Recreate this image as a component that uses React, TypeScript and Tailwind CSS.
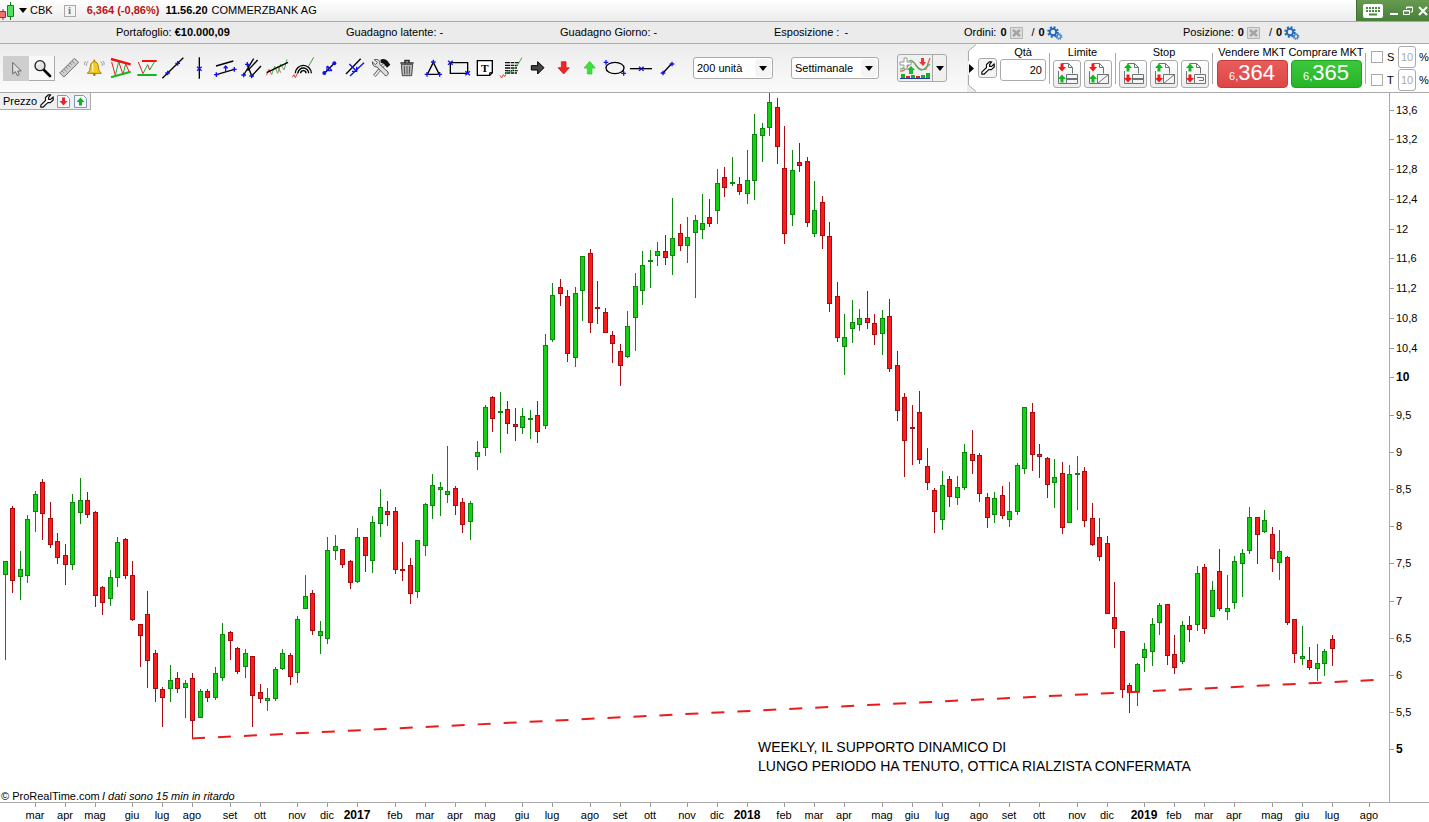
import type { ReactNode } from "react";

type Candle = ["g" | "r", number, number, number, number];

// direction, high, body top, body bottom, low
const candles: Candle[] = [
  ["g", 561, 561, 575, 660], ["r", 506, 508, 581, 593], ["g", 551, 569, 577, 600], ["g", 515, 519, 576, 583],
  ["g", 491, 494, 512, 532], ["r", 479, 482, 514, 540], ["r", 502, 518, 545, 548], ["r", 533, 541, 558, 564],
  ["r", 544, 555, 565, 585], ["g", 494, 502, 565, 570], ["g", 478, 500, 513, 524], ["r", 492, 500, 515, 518],
  ["r", 511, 512, 596, 607], ["r", 586, 587, 603, 615], ["g", 570, 577, 599, 606], ["g", 537, 542, 578, 587],
  ["r", 538, 539, 576, 579], ["r", 561, 575, 620, 621], ["r", 624, 624, 636, 667], ["r", 591, 614, 661, 688],
  ["r", 650, 653, 689, 702], ["r", 687, 689, 698, 727], ["g", 665, 680, 689, 702], ["r", 672, 678, 689, 693],
  ["g", 680, 683, 688, 718], ["r", 673, 678, 721, 738], ["g", 689, 691, 718, 718], ["r", 689, 691, 698, 702],
  ["g", 667, 673, 698, 700], ["g", 623, 634, 678, 681], ["r", 631, 632, 641, 660], ["r", 647, 648, 672, 674],
  ["g", 649, 653, 667, 678], ["r", 656, 656, 696, 727], ["r", 684, 692, 699, 703], ["g", 688, 698, 701, 711],
  ["g", 667, 669, 699, 701], ["g", 649, 653, 669, 670], ["r", 653, 655, 677, 685], ["g", 616, 619, 673, 683],
  ["g", 575, 596, 609, 609], ["r", 590, 593, 631, 635], ["g", 621, 631, 636, 654], ["g", 537, 550, 639, 644],
  ["g", 535, 546, 551, 560], ["r", 549, 549, 565, 568], ["r", 560, 561, 583, 589], ["g", 528, 537, 582, 583],
  ["r", 537, 537, 556, 572], ["g", 516, 522, 561, 573], ["g", 489, 507, 524, 537], ["r", 501, 511, 515, 526],
  ["r", 507, 511, 570, 574], ["r", 542, 569, 571, 581], ["r", 558, 565, 594, 604], ["g", 540, 540, 592, 598],
  ["g", 503, 504, 546, 556], ["g", 474, 485, 506, 519], ["g", 482, 487, 490, 516], ["g", 446, 491, 495, 503],
  ["r", 486, 488, 506, 515], ["r", 498, 502, 525, 533], ["g", 501, 503, 522, 540], ["g", 441, 452, 457, 470],
  ["g", 405, 407, 448, 456], ["r", 396, 397, 419, 432], ["g", 392, 411, 413, 453], ["r", 401, 409, 424, 434],
  ["r", 408, 424, 427, 441], ["g", 408, 416, 428, 434], ["g", 410, 418, 420, 439], ["r", 401, 415, 432, 443],
  ["g", 334, 345, 426, 429], ["g", 283, 295, 340, 342], ["r", 279, 287, 294, 306], ["r", 290, 296, 354, 362],
  ["g", 287, 293, 358, 367], ["g", 256, 256, 291, 321], ["r", 249, 253, 323, 333], ["r", 281, 307, 309, 324],
  ["r", 308, 312, 333, 333], ["r", 331, 335, 344, 363], ["r", 344, 351, 366, 386], ["g", 311, 326, 357, 358],
  ["g", 273, 286, 318, 351], ["g", 251, 265, 291, 305], ["g", 250, 260, 262, 288], ["g", 242, 251, 256, 266],
  ["r", 235, 251, 258, 265], ["g", 198, 238, 256, 275], ["r", 224, 233, 246, 251], ["g", 217, 237, 246, 263],
  ["g", 215, 220, 233, 298], ["g", 194, 223, 230, 239], ["r", 199, 217, 224, 227], ["g", 169, 183, 211, 224],
  ["r", 167, 177, 188, 197], ["g", 157, 182, 184, 186], ["r", 177, 184, 192, 195], ["g", 150, 180, 194, 204],
  ["g", 114, 134, 181, 200], ["g", 123, 128, 136, 162], ["g", 93, 102, 128, 136], ["r", 98, 107, 147, 164],
  ["r", 126, 168, 234, 244], ["g", 150, 170, 215, 226], ["r", 143, 162, 166, 172], ["r", 157, 161, 223, 227],
  ["g", 181, 210, 234, 237], ["r", 196, 202, 236, 249], ["r", 222, 236, 304, 312], ["r", 282, 296, 338, 342],
  ["g", 314, 337, 347, 375], ["g", 300, 322, 329, 343], ["g", 309, 318, 325, 331], ["r", 291, 318, 323, 329],
  ["r", 314, 323, 335, 345], ["g", 310, 318, 334, 355], ["r", 299, 316, 369, 372], ["r", 351, 365, 411, 421],
  ["r", 393, 397, 441, 477], ["r", 405, 427, 429, 465], ["r", 391, 412, 460, 464], ["r", 448, 466, 483, 490],
  ["r", 488, 490, 512, 533], ["g", 471, 485, 520, 530], ["r", 476, 479, 497, 507], ["g", 476, 487, 498, 505],
  ["g", 444, 452, 488, 490], ["r", 430, 454, 461, 474], ["r", 453, 455, 494, 502], ["r", 493, 497, 518, 528],
  ["g", 492, 498, 515, 523], ["r", 486, 495, 516, 519], ["g", 482, 511, 520, 527], ["g", 463, 465, 512, 515],
  ["g", 407, 407, 469, 474], ["r", 403, 412, 455, 471], ["r", 444, 454, 457, 478], ["r", 457, 458, 485, 498],
  ["g", 459, 477, 483, 508], ["r", 462, 473, 528, 534], ["g", 465, 474, 523, 523], ["g", 456, 473, 475, 510],
  ["r", 467, 471, 521, 527], ["r", 503, 518, 545, 546], ["r", 518, 537, 557, 561], ["r", 536, 543, 614, 614],
  ["r", 582, 617, 629, 648], ["r", 631, 631, 690, 698], ["r", 683, 685, 693, 713], ["g", 663, 664, 692, 706],
  ["g", 643, 649, 658, 672], ["g", 618, 624, 652, 666], ["g", 603, 605, 623, 635], ["r", 604, 604, 656, 665],
  ["r", 635, 654, 668, 674], ["g", 621, 625, 662, 664], ["r", 616, 625, 630, 642], ["g", 566, 573, 625, 631],
  ["r", 564, 567, 629, 634], ["g", 581, 590, 617, 617], ["r", 549, 571, 609, 611], ["g", 575, 608, 612, 620],
  ["g", 556, 561, 603, 609], ["g", 549, 553, 564, 597], ["g", 507, 517, 551, 554], ["r", 517, 517, 535, 564],
  ["g", 510, 520, 532, 533], ["r", 527, 534, 559, 572], ["g", 530, 551, 563, 580], ["r", 556, 557, 623, 625],
  ["r", 619, 619, 654, 663], ["g", 626, 656, 659, 665], ["r", 647, 660, 668, 670], ["g", 644, 663, 669, 681],
  ["g", 649, 651, 664, 676], ["r", 635, 639, 649, 666],
];

const prices: [string, number][] = [
  ["13,6", 110], ["13,2", 139], ["12,8", 169], ["12,4", 199], ["12", 229], ["11,6", 258], ["11,2", 288],
  ["10,8", 318], ["10,4", 348], ["10", 377], ["9,5", 415], ["9", 452], ["8,5", 489], ["8", 526], ["7,5", 563],
  ["7", 601], ["6,5", 638], ["6", 675], ["5,5", 712], ["5", 749],
];

const months: [string, number][] = [
  ["mar", 35], ["apr", 65], ["mag", 95], ["giu", 132], ["lug", 162], ["ago", 192], ["set", 230], ["ott", 260],
  ["nov", 297], ["dic", 327], ["2017", 357], ["feb", 395], ["mar", 425], ["apr", 455], ["mag", 485], ["giu", 522],
  ["lug", 552], ["ago", 590], ["set", 620], ["ott", 650], ["nov", 687], ["dic", 717], ["2018", 747], ["feb", 784],
  ["mar", 814], ["apr", 844], ["mag", 882], ["giu", 912], ["lug", 942], ["ago", 979], ["set", 1009], ["ott", 1039],
  ["nov", 1077], ["dic", 1107], ["2019", 1144], ["feb", 1174], ["mar", 1204], ["apr", 1234], ["mag", 1272],
  ["giu", 1302], ["lug", 1332], ["ago", 1369],
];

const candleX = (i: number) => Math.floor(5.49 + 7.4947 * i);

function Plus({ x, y }: { x: number; y: number }) {
  return <path d={`M${x - 7} ${y}h14M${x} ${y - 7}v14`} stroke="#1010f0" strokeWidth="4" />;
}

function Cross({ x, y }: { x: number; y: number }) {
  return <path d={`M${x - 7} ${y - 6}l14 12M${x + 7} ${y - 6}l-14 12`} stroke="#1010f0" strokeWidth="4" />;
}

// Toolbar glyphs, all on a 78x72 grid
const tools: { name: string; icon: ReactNode }[] = [
  {
    name: "Cursore",
    icon: <path d="M29 19v35l8-7 6 12 6-3-5-11h11z" fill="#dedede" stroke="#666" strokeWidth="3" />,
  },
  {
    name: "Zoom",
    icon: (
      <>
        <path d="M45 42l18 18" stroke="#000" strokeWidth="8" strokeLinecap="round" />
        <circle cx="33" cy="29" r="15" fill="#e4e4e4" stroke="#222" strokeWidth="4" />
        <path d="M25 28q2-8 9-8" stroke="#fff" strokeWidth="4" />
      </>
    ),
  },
  {
    name: "Righello",
    icon: (
      <>
        <path d="M14 51L58 7l13 12L27 63z" fill="#cdcdcd" stroke="#777" strokeWidth="3" />
        <path d="M21 45l5 5M27 39l7 7M33 33l5 5M39 27l7 7M45 21l5 5M51 15l7 7" stroke="#666" strokeWidth="2" />
      </>
    ),
  },
  {
    name: "Allarme",
    icon: (
      <>
        <circle cx="40" cy="56" r="4" fill="#a97b00" />
        <path d="M19 52q9-6 9-20 1-15 12-15t12 15q0 14 9 20z" fill="#f7c81e" stroke="#a88008" strokeWidth="3" />
        <path d="M35 23v24" stroke="#fff4a8" strokeWidth="4" />
        <path d="M40 17v-6" stroke="#a88008" strokeWidth="5" />
        <path d="M21 16q-6 6-5 14M14 15q-5 5-3 12M59 16q6 6 5 14M66 15q5 5 3 12" stroke="#777" strokeWidth="2" />
      </>
    ),
  },
  {
    name: "Triangolo di prezzo",
    icon: (
      <>
        <path d="M14 18l11 40M35 17l13 38M56 23l11 26" stroke="#e02020" strokeWidth="3" />
        <path d="M25 58l10-41M48 55l8-32" stroke="#18a830" strokeWidth="3" />
        <path d="M12 9l59 16" stroke="#f01010" strokeWidth="7" />
        <path d="M12 64l59-17" stroke="#10b820" strokeWidth="6" />
      </>
    ),
  },
  {
    name: "Supporti e resistenze",
    icon: (
      <>
        <path d="M30 53l14-27M50 42l14-24" stroke="#18a830" strokeWidth="3" />
        <path d="M16 18l14 35M44 26l6 16" stroke="#e02020" strokeWidth="3" />
        <path d="M27 15h44" stroke="#f01010" strokeWidth="6" />
        <path d="M13 57h58" stroke="#10b820" strokeWidth="6" />
      </>
    ),
  },
  {
    name: "Retta",
    icon: (
      <>
        <path d="M10 67L73 5" stroke="#000" strokeWidth="4" />
        <Plus x={26} y={51} />
        <Plus x={56} y={22} />
      </>
    ),
  },
  {
    name: "Retta verticale",
    icon: (
      <>
        <path d="M43 4v64" stroke="#000" strokeWidth="4" />
        <Cross x={43} y={38} />
      </>
    ),
  },
  {
    name: "Canale",
    icon: (
      <>
        <path d="M15 30l52-15M16 56l54-16" stroke="#000" strokeWidth="4" />
        <path d="M44 30v18M38 37l6-7 6 7" stroke="#1010f0" strokeWidth="4" />
        <Plus x={16} y={56} />
        <Plus x={70} y={40} />
      </>
    ),
  },
  {
    name: "Forchetta di Andrews",
    icon: (
      <>
        <path d="M31 25l13 35M20 57L50 8M32 44L62 12M44 60L72 30" stroke="#000" strokeWidth="4" />
        <Plus x={20} y={57} />
        <Plus x={31} y={25} />
        <Plus x={44} y={60} />
      </>
    ),
  },
  {
    name: "Regressione lineare",
    icon: (
      <>
        <path d="M10 58l8-18 8 16M44 30l9 20" stroke="#e05040" strokeWidth="3" />
        <path d="M26 56l9-26 9 22 9-28 10 18 9-32" stroke="#58b060" strokeWidth="3" />
        <path d="M11 50l64-31" stroke="#000" strokeWidth="4" />
      </>
    ),
  },
  {
    name: "Archi di Fibonacci",
    icon: (
      <>
        <path d="M10 64l5-8 4 9 9-19" stroke="#e04030" strokeWidth="3" />
        <path d="M28 46l12-14M58 32L74 4" stroke="#28a838" strokeWidth="3" />
        <path d="M19 52a24 24 0 0 1 48 0M27 52a16 16 0 0 1 32 0M35 52a8 8 0 0 1 16 0" stroke="#000" strokeWidth="4" />
      </>
    ),
  },
  {
    name: "Estensione",
    icon: (
      <>
        <path d="M29 51l29-29" stroke="#000" strokeWidth="4" />
        <circle cx="28" cy="51" r="6" fill="#1010f0" />
        <circle cx="58" cy="22" r="6" fill="#1010f0" />
        <path d="M36 30v14h14M37 30l14 14" stroke="#1010f0" strokeWidth="4" />
      </>
    ),
  },
  {
    name: "Rette parallele",
    icon: (
      <>
        <path d="M15 54l44-46" stroke="#000" strokeWidth="4" />
        <path d="M27 60l42-40M25 24l22 22M47 32v14H33" stroke="#1010f0" strokeWidth="4" />
      </>
    ),
  },
  {
    name: "Strumenti",
    icon: (
      <>
        <path d="M22 60l28-34" stroke="#666" strokeWidth="10" />
        <path d="M23 59l27-33" stroke="#eee" strokeWidth="5" />
        <path d="M16 17l9 9 6-6-9-9q13-3 17 7l-1 7 25 23q4 7-4 11-5 1-9-5L30 33q-14 0-14-16z" fill="#ddd" stroke="#555" strokeWidth="3" />
        <path d="M40 11q13-5 21 3l9 12-10 9-9-11-9-4z" fill="#111" />
      </>
    ),
  },
  {
    name: "Cestino",
    icon: (
      <>
        <path d="M25 25h34l-3 34H28z" fill="#bbb" stroke="#444" strokeWidth="3" />
        <path d="M22 21h40M36 19v-5h12v5" stroke="#333" strokeWidth="5" />
        <path d="M34 30l1 25M42 30v25M50 30l-1 25" stroke="#555" strokeWidth="3" />
      </>
    ),
  },
  {
    name: "Triangolo",
    icon: (
      <>
        <path d="M43 19L25 55h36z" stroke="#000" strokeWidth="4" />
        <Plus x={43} y={18} />
        <Plus x={24} y={55} />
        <Plus x={62} y={55} />
      </>
    ),
  },
  {
    name: "Rettangolo",
    icon: (
      <>
        <path d="M16 20h52v32H16z" stroke="#000" strokeWidth="4" />
        <Cross x={16} y={20} />
        <Cross x={68} y={52} />
      </>
    ),
  },
  {
    name: "Testo",
    icon: (
      <>
        <path d="M19 14h45v36l-8 8H19z" fill="#fff" stroke="#000" strokeWidth="4" />
        <path d="M64 50h-8v8" stroke="#000" strokeWidth="3" />
        <text x="41" y="48" textAnchor="middle" fontSize="34" fontWeight="bold" fill="#000" className="font-['Liberation_Serif',serif]">T</text>
      </>
    ),
  },
  {
    name: "Note",
    icon: (
      <>
        <path d="M24 20h42M24 28h38M24 36h36M24 44h38M24 51h36" stroke="#111" strokeWidth="4" strokeDasharray="16 2 9 2" />
        <path d="M9 58l5 8 5-10 4 6" stroke="#e04030" strokeWidth="3" />
        <path d="M23 62l10-18 9 4L62 26 75 5" stroke="#38a848" strokeWidth="3" />
      </>
    ),
  },
  {
    name: "Freccia destra",
    icon: <path d="M25 29h19V17l19 18-19 19V42H25z" fill="#444" stroke="#000" strokeWidth="3" />,
  },
  {
    name: "Freccia giù",
    icon: <path d="M37 17h14v18h10L44 54 27 35h10z" fill="#f02525" stroke="#c01010" strokeWidth="2" />,
  },
  {
    name: "Freccia su",
    icon: <path d="M37 54h14V36h10L44 16 27 36h10z" fill="#3ce03c" stroke="#28c828" strokeWidth="2" />,
  },
  {
    name: "Ellisse",
    icon: (
      <>
        <ellipse cx="42" cy="36" rx="27" ry="17" stroke="#000" strokeWidth="4" />
        <Plus x={15} y={19} />
        <Plus x={68} y={52} />
      </>
    ),
  },
  {
    name: "Retta orizzontale",
    icon: (
      <>
        <path d="M9 38h66" stroke="#000" strokeWidth="4" />
        <Cross x={43} y={38} />
      </>
    ),
  },
  {
    name: "Segmento",
    icon: (
      <>
        <path d="M30 51l25-27" stroke="#000" strokeWidth="4" />
        <Plus x={30} y={51} />
        <Plus x={57} y={24} />
      </>
    ),
  },
];

function Wrench() {
  return (
    <svg viewBox="0 0 14 14" className="size-3.5" fill="none" stroke="#111" strokeWidth="1.2" strokeLinejoin="round">
      <path d="M.8 11.2L5.5 6.500V3.500L8.500.8h2.200L8.600 3.400v2h2L13.200 3v3l-2.800 2.600H7.800L3 13.200H.8z" fill="#fff" />
    </svg>
  );
}

function Gears() {
  return (
    <svg viewBox="0 0 16 14" className="h-3.5 w-4" fill="none">
      <circle cx="6" cy="6" r="4.8" stroke="#2468b8" strokeWidth="2" strokeDasharray="2 1.77" />
      <circle cx="6" cy="6" r="3.2" stroke="#2468b8" strokeWidth="2" />
      <circle cx="12" cy="10.5" r="2.8" stroke="#3c80cc" strokeWidth="1.2" strokeDasharray="1.2 1" />
      <circle cx="12" cy="10.5" r="1.8" stroke="#3c80cc" strokeWidth="1.2" />
    </svg>
  );
}

function CancelIcon() {
  return (
    <svg viewBox="0 0 13 12" className="h-3 w-[13px]" fill="none">
      <path d="M.5.5h12v11H.5z" fill="#ddd" stroke="#b4b4b4" />
      <path d="M3 3l7 6M10 3L3 9" stroke="#a4a4a4" strokeWidth="2.5" />
    </svg>
  );
}

function Caret() {
  return (
    <svg viewBox="0 0 8 5" className="h-[5px] w-2">
      <path d="M0 0h8L4 5z" fill="#000" />
    </svg>
  );
}

function Picker({ label, value, width }: { label: string; value: string; width: string }) {
  return (
    <div className={`relative h-[22px] ${width}`}>
      <select
        aria-label={label}
        defaultValue={value}
        className="h-full w-full appearance-none rounded-[3px] border border-[#aaa] bg-white pl-[3px] text-black"
      >
        <option>{value}</option>
      </select>
      <span className="pointer-events-none absolute top-0.5 right-0.5 flex h-[18px] w-4 items-center justify-center rounded-sm bg-[#f4f4f4]">
        <Caret />
      </span>
    </div>
  );
}

function OrderButton({ label, upFirst, kind }: { label: string; upFirst: boolean; kind: "split" | "slash" | "trail" }) {
  return (
    <button aria-label={label} className="flex size-7 items-center justify-center rounded-[3px] border border-[#aaa] bg-linear-to-b from-white to-[#ececec]">
      <svg viewBox="0 0 26 26" className="size-[26px] shrink-0" fill="none">
        <path d="M7.500 2.500h7l4 4v6M14.500 2.500v4h4M4.500 10v12.500h8" stroke="#6c7478" />
        <path d="M12.500 13.500h11v9h-11z" fill="#f4f4f4" stroke="#6c7478" />
        {kind === "split" && <path d="M12 18h12" stroke="#6c7478" strokeWidth="2" />}
        {kind === "slash" && <path d="M12.500 22.500l11-9" stroke="#6c7478" />}
        {kind === "trail" && <path d="M15 16.500h6.500v3H17" stroke="#6c7478" />}
        {upFirst ? (
          <>
            <path d="M6.500 10.500V7H4l4-4.500L12 7H9.500v3.500z" fill="#10b820" />
            <path d="M6.500 13.500V17H4l4 4.500 4-4.500H9.500v-3.500z" fill="#f01818" />
          </>
        ) : (
          <>
            <path d="M6.500 2.500V6H4l4 4.500L12 6H9.500V2.500z" fill="#f01818" />
            <path d="M6.500 21.500V18H4l4-4.500 4 4.500H9.500v3.500z" fill="#10b820" />
          </>
        )}
      </svg>
    </button>
  );
}

function Divider() {
  return <div className="mx-[3px] h-[31px] w-px self-center bg-[#aaa]" />;
}

function TitleBar() {
  return (
    <header className="flex h-[22px] items-center border-b border-[#aaa] bg-linear-to-b from-white to-[#ececec]">
      <svg viewBox="0 0 14 18" className="h-[18px] w-3.5">
        <path d="M3 7v11" stroke="#a02020" />
        <path d="M-.5 9.500h6v6h-6z" fill="#f07070" stroke="#a03030" />
        <path d="M10.500 0v18" stroke="#108010" />
        <path d="M7.500 3.500h6v11h-6z" fill="#50e060" stroke="#188020" />
      </svg>
      <button aria-label="Elenco titoli" className="ml-[5px]">
        <Caret />
      </button>
      <span className="ml-[3px]">CBK</span>
      <button aria-label="Informazioni" className="ml-[11px] flex size-3 items-center justify-center border border-[#aaa] bg-[#f4f4f4] font-['Liberation_Serif',serif] font-bold text-[#777]">
        i
      </button>
      <span className="ml-[11px] font-bold text-[#b81414]">6,364 (-0,86%)</span>
      <span className="ml-1.5 font-bold">11.56.20</span>
      <span className="ml-1">COMMERZBANK AG</span>
      <div className="ml-auto flex h-full w-[73px] items-center border-l border-[#456c34] bg-linear-to-b from-[#659a50] to-[#48803a] pl-1.5 text-white">
        <button aria-label="Tastiera">
          <svg viewBox="0 0 20 14" className="h-3.5 w-5">
            <rect width="20" height="14" rx="2" fill="#fff" />
            <path d="M3 4h14M3 7h14" stroke="#4d8640" strokeWidth="2" strokeDasharray="2 1" />
            <path d="M6 10.500h8" stroke="#4d8640" strokeWidth="2" />
          </svg>
        </button>
        <button aria-label="Riduci" className="ml-1.5">
          <svg viewBox="0 0 10 10" className="size-2.5">
            <path d="M1 8h8" stroke="#fff" strokeWidth="2" />
          </svg>
        </button>
        <button aria-label="Ripristina" className="ml-1">
          <svg viewBox="0 0 10 10" className="size-2.5" fill="none" stroke="#fff">
            <path d="M3.500 3V1h6v5h-2M.5 4.500h6v4h-6zM3 1.500h6M1 5h5" />
          </svg>
        </button>
        <button aria-label="Chiudi" className="ml-[5px]">
          <svg viewBox="0 0 10 10" className="size-2.5">
            <path d="M1 1l8 8M9 1L1 9" stroke="#fff" strokeWidth="2" />
          </svg>
        </button>
      </div>
    </header>
  );
}

function AccountBar() {
  return (
    <div className="grid h-[22px] grid-cols-[230fr_214fr_214fr_190fr_219fr_246fr] items-center border-b border-[#aaa] bg-[#ebebeb] pl-[116px] whitespace-nowrap">
      <span>Portafoglio: <b>€10.000,09</b></span>
      <span>Guadagno latente: -</span>
      <span>Guadagno Giorno: -</span>
      <span>Esposizione : <span className="ml-0.5">-</span></span>
      {["Ordini:", "Posizione:"].map((label) => (
        <span key={label} className="flex items-center">
          {label} <b className="mr-[3px] ml-1">0</b>
          <CancelIcon />
          <span className="mr-1 ml-[9px]">/</span>
          <b className="mr-0.5">0</b>
          <Gears />
        </span>
      ))}
    </div>
  );
}

function TradingPanel() {
  return (
    <div className="ml-auto flex h-full shrink-0">
      <svg viewBox="0 0 9 48" className="h-12 w-[9px] bg-[#ececec]" fill="none">
        <path d="M9 0L1.500 7v34L9 48z" fill="#fff" />
        <path d="M9 .5L1.500 7v10M1.500 31v10L9 47.500" stroke="#aaa" />
        <path d="M2 20l5 4.500L2 29z" fill="#000" />
      </svg>
      <div className="flex bg-white pl-0.5">
        <button aria-label="Impostazioni ordini" className="mt-3.5 flex h-5 w-[19px] items-center justify-center rounded-[3px] border border-[#aaa] bg-[#f4f4f4]">
          <Wrench />
        </button>
        <div className="ml-[3px] flex w-[46px] flex-col">
          <label htmlFor="qty" className="h-[15px] text-center leading-4">Qtà</label>
          <input id="qty" defaultValue="20" className="h-[22px] w-full rounded-[3px] border border-[#aaa] bg-white pr-[3px] text-right" />
        </div>
        <Divider />
        <div className="flex flex-col">
          <span className="h-4 text-center leading-4">Limite</span>
          <div className="flex gap-[3px]">
            <OrderButton label="Limite" upFirst={false} kind="split" />
            <OrderButton label="Limite rapido" upFirst={false} kind="slash" />
          </div>
        </div>
        <Divider />
        <div className="flex flex-col">
          <span className="h-4 text-center leading-4">Stop</span>
          <div className="flex gap-[3px]">
            <OrderButton label="Stop" upFirst kind="split" />
            <OrderButton label="Stop rapido" upFirst kind="slash" />
            <OrderButton label="Trailing stop" upFirst kind="trail" />
          </div>
        </div>
        <Divider />
        <div className="flex w-[72px] flex-col items-center whitespace-nowrap">
          <span className="h-4 leading-4">Vendere MKT</span>
          <button className="h-7 w-[71px] rounded-[4px] border border-[#c43c3c] bg-linear-to-b from-[#e85c5c] to-[#de4646] leading-6 text-white">
            6,<span className="text-[22px]">364</span>
          </button>
        </div>
        <div className="ml-0.5 flex w-[72px] flex-col items-center whitespace-nowrap">
          <span className="h-4 leading-4">Comprare MKT</span>
          <button className="h-7 w-[71px] rounded-[4px] border border-[#1fa01f] bg-linear-to-b from-[#3cc83c] to-[#26b426] leading-6 text-white">
            6,<span className="text-[22px]">365</span>
          </button>
        </div>
        <Divider />
        <div className="flex w-[60px] flex-col gap-px pt-0.5 pl-0.5">
          {["S", "T"].map((side) => (
            <div key={side} className="flex h-[22px] items-center">
              <input id={`use-${side}`} type="checkbox" className="size-3 appearance-none border border-[#aaa] bg-white" />
              <label htmlFor={`use-${side}`} className="ml-1 w-[11px]">{side}</label>
              <input aria-label={`${side} %`} defaultValue="10" className="h-[22px] w-[18px] rounded-[3px] border border-[#aaa] bg-white text-center text-[#aaa]" />
              <span className="ml-[3px]">%</span>
            </div>
          ))}
        </div>
      </div>
    </div>
  );
}

function Toolbar() {
  return (
    <div className="flex h-[49px] border-b border-[#aaa] bg-linear-to-b from-[#ececec] to-[#fbfbfb]">
      <div className="flex items-center pl-[3px]">
        {tools.map(({ name, icon }, i) => (
          <button
            key={name}
            aria-label={name}
            className={`h-[25px] w-[26px] ${i === 0 ? "bg-[#cecece]" : i === 1 ? "border-r border-b border-[#aaa] bg-[#f8f8f8]" : ""}`}
          >
            <svg viewBox="0 0 78 72" className="h-6 w-[26px]" fill="none">{icon}</svg>
          </button>
        ))}
      </div>
      <div className="flex items-center pl-3.5">
        <Picker label="Unità" value="200 unità" width="w-20" />
        <div className="w-[18px]" />
        <Picker label="Periodo" value="Settimanale" width="w-[88px]" />
        <div className="ml-[18px] flex h-7 w-[50px] rounded-[3px] border border-[#aaa] bg-[#f0f0f0]">
          <button aria-label="Indicatori" className="flex flex-1 items-center justify-center">
            <svg viewBox="0 0 32 24" className="h-6 w-8" fill="none">
              <path d="M1 15q5 1 9-7 3-5 7 1t10 4l4-11" stroke="#d85858" strokeWidth="1.2" />
              <path d="M1 13q5 0 8-6t7 1 7 6 8-6" stroke="#48b458" strokeWidth="1.2" />
              <path d="M5 2h3v4h4v3H8v4H5V9H1V6h4z" fill="#fff" stroke="#999" />
              <path d="M10 18v-4H8l4-4 4 4h-2v4z" fill="#18b830" />
              <path d="M22 2h3v4h2l-3 4-4-4h2z" fill="#e83838" />
              <path d="M2 22v-4h4v4zM12 22v-3h4v3zM22 22v-3h4v3zM27 22v-5h4v5z" fill="#18b020" />
              <path d="M7 22v-2h4v2zM17 22v-2h4v2z" fill="#e02020" />
              <path d="M1 22.500h30" stroke="#2038a8" />
            </svg>
          </button>
          <button aria-label="Altri indicatori" className="flex w-3.5 items-center justify-center border-l border-[#aaa]">
            <Caret />
          </button>
        </div>
      </div>
      <TradingPanel />
    </div>
  );
}

function PriceChart() {
  return (
    <svg viewBox="0 93 1429 729" className="block w-full font-['Liberation_Sans',Arial,sans-serif]" fontSize="11">
      {candles.map(([dir, high, top, bottom, low], i) => {
        const x = candleX(i);
        const stroke = dir === "g" ? "#0c860c" : "#a80c10";
        return (
          <g key={i} shapeRendering="crispEdges">
            <rect x={x} y={high} width="1" height={low - high} fill={stroke} />
            <rect x={x - 2} y={top} width="5" height={bottom - top} fill={stroke} />
            {bottom - top > 2 && (
              <rect x={x - 1} y={top + 1} width="3" height={bottom - top - 2} fill={dir === "g" ? "#14d014" : "#fc1c1c"} />
            )}
          </g>
        );
      })}
      <path d="M192 738.500L1375 680" stroke="#e81c1c" strokeWidth="2" strokeDasharray="13 13" />

      <text x="758" y="752" fontSize="14">WEEKLY, IL SUPPORTO DINAMICO DI</text>
      <text x="758" y="771" fontSize="14">LUNGO PERIODO HA TENUTO, OTTICA RIALZISTA CONFERMATA</text>
      <text x="1" y="800">© ProRealTime.com</text>
      <text x="102" y="800" fontStyle="italic">I dati sono 15 min in ritardo</text>

      <path d="M1389.500 93v709.500M0 802.500h1429" stroke="#aaa" shapeRendering="crispEdges" />
      {prices.map(([label, y]) => {
        const major = label === "10" || label === "5";
        return (
          <g key={label}>
            <path d={`M1390 ${y + 0.5}h4`} stroke="#999" />
            <text x="1396" y={y + 4} fontSize={major ? 12 : 11} fontWeight={major ? "bold" : "normal"}>{label}</text>
          </g>
        );
      })}
      {months.map(([label, x]) => {
        const year = label.startsWith("20");
        return (
          <g key={x}>
            <path d={`M${x + 0.5} 803v4`} stroke="#999" />
            <text x={x} y="819" textAnchor="middle" fontSize={year ? 12 : 11} fontWeight={year ? "bold" : "normal"}>{label}</text>
          </g>
        );
      })}
    </svg>
  );
}

export default function App() {
  return (
    <div className="flex min-h-screen flex-col bg-white font-['Liberation_Sans',Arial,sans-serif] text-[11px] text-black">
      <TitleBar />
      <AccountBar />
      <Toolbar />
      <main className="relative">
        <PriceChart />
        <div className="absolute top-0 left-0 flex h-[17px] items-center border-r border-b border-[#aaa] bg-[#f0f0f0] pr-[3px] pl-[3px]">
          <span>Prezzo</span>
          <button aria-label="Impostazioni prezzo" className="mr-[3px] ml-[3px]">
            <Wrench />
          </button>
          <button aria-label="Sposta giù">
            <svg viewBox="0 0 13 13" className="size-[13px]">
              <path d="M.5.5h9l3 3v9H.5z" fill="#f4f8fc" stroke="#8098b8" />
              <path d="M5 2.500h3V6h2.500l-4 4.500-4-4.500H5z" fill="#e82828" />
            </svg>
          </button>
          <button aria-label="Sposta su" className="ml-1">
            <svg viewBox="0 0 13 13" className="size-[13px]">
              <path d="M.5.5h9l3 3v9H.5z" fill="#f4f8fc" stroke="#8098b8" />
              <path d="M5 10.500h3V7h2.500l-4-4.500-4 4.500H5z" fill="#18b020" />
            </svg>
          </button>
        </div>
      </main>
    </div>
  );
}
